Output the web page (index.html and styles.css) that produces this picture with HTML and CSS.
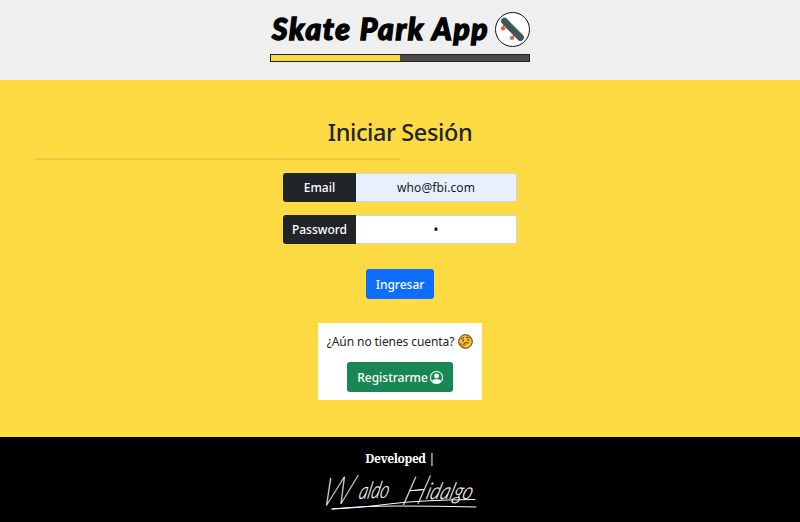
FILE: index.html
```html
<!DOCTYPE html>
<html lang="es">
<head>
<meta charset="utf-8">
<title>Skate Park App</title>
<link rel="stylesheet" href="styles.css">
</head>
<body>
<header class="header">
  <div class="brand">
    <h1 class="brand-name">Skate Park App</h1>
    <svg class="brand-logo" viewBox="0 0 35 35" aria-hidden="true">
      <circle cx="17.5" cy="17.5" r="17" fill="#fff" stroke="#111"/>
      <circle cx="8" cy="16.5" r="2.100" fill="#f2583e"/>
      <circle cx="17" cy="26" r="2.100" fill="#f2583e"/>
      <path d="M9 13l-1 3M19 23l-2 3" stroke="#f2583e" stroke-width="2"/>
      <path d="M9.500 9L13 13 21.500 21.500 25.500 25.500" fill="none" stroke="#3e565b" stroke-width="6.800" stroke-linecap="round" stroke-linejoin="round"/>
      <path d="M11 6.500L28.500 24" stroke="#83877a" stroke-width="1" stroke-dasharray="1 1"/>
    </svg>
  </div>
  <div class="bar"></div>
</header>
<main class="main">
  <h2 class="title">Iniciar Sesión</h2>
  <hr class="rule">
  <form class="form">
    <div class="group">
      <label class="label" for="email">Email</label>
      <input class="input filled" id="email" type="text" value="who@fbi.com">
    </div>
    <div class="group">
      <label class="label" for="password">Password</label>
      <input class="input dot" id="password" type="text" value="•">
    </div>
    <button class="btn primary" type="button">Ingresar</button>
  </form>
  <section class="card">
    <p class="question"><span>¿Aún no tienes cuenta?</span>
      <svg class="emoji" viewBox="0 0 16 16" aria-hidden="true">
        <circle cx="8" cy="8" r="7.300" fill="#fbbd2e" stroke="#3b3020" stroke-width="1"/>
        <path d="M3.500 5l2.500-1M9 3.500q2-.8 3.300.7M6.500 9.800q2.500-1.200 4.500-.3" fill="none" stroke="#33302a" stroke-width="1" stroke-linecap="round"/>
        <circle cx="5.500" cy="6.800" r=".9" fill="#33302a"/>
        <circle cx="10.700" cy="6.500" r=".9" fill="#33302a"/>
        <path d="M2.500 10.300q1-.6 1.300 1l3.700-.8q1.200.3.300 1l-1.500.7q.3 2-1.500 2-2-.3-2.300-3.900z" fill="#f5a51c" stroke="#5b4020" stroke-width=".5"/>
      </svg>
    </p>
    <button class="btn success" type="button">Registrarme
      <svg class="person" viewBox="0 0 16 16" fill="currentColor" aria-hidden="true">
        <path d="M11 6a3 3 0 1 1-6 0 3 3 0 0 1 6 0z"/>
        <path fill-rule="evenodd" stroke="currentColor" stroke-width=".4" d="M0 8a8 8 0 1 1 16 0A8 8 0 0 1 0 8zm8-7a7 7 0 0 0-5.468 11.370C3.242 11.226 4.805 10 8 10s4.757 1.225 5.468 2.370A7 7 0 0 0 8 1z"/>
      </svg>
    </button>
  </section>
</main>
<footer class="footer">
  <div class="developed">Developed |</div>
  <svg class="signature" viewBox="0 0 156 42">
    <g class="sign-text">
      <text class="cap" transform="translate(-2 36) rotate(-6) skewX(-22)" textLength="30" lengthAdjust="spacingAndGlyphs">W</text>
      <text class="low" transform="translate(36 29) rotate(-3) skewX(-16)" textLength="30" lengthAdjust="spacingAndGlyphs">aldo</text>
      <text class="cap" transform="translate(79 35) rotate(-5) skewX(-24)" textLength="22" lengthAdjust="spacingAndGlyphs">H</text>
      <text class="low" transform="translate(103 29) skewX(-16)" textLength="46" lengthAdjust="spacingAndGlyphs">idalgo</text>
    </g>
    <path class="stroke" d="M10 39Q36 38 67 34T153 29.500M10 39Q38 36 77 36T154 37"/>
  </svg>
</footer>
</body>
</html>
```
FILE: styles.css
```css
* { box-sizing: border-box; }
body {
  margin: 0;
  height: 522px;
  display: flex;
  flex-direction: column;
  overflow: hidden;
  font-family: "Noto Sans", "Open Sans", sans-serif;
  font-size: 12px;
  color: #212529;
}
.header {
  height: 80px;
  background: #efefef;
  display: flex;
  flex-direction: column;
  align-items: center;
  padding-top: 11px;
}
.brand {
  width: 260px;
  height: 36px;
  display: flex;
  align-items: center;
  justify-content: space-between;
}
.brand-name {
  margin: -2px 0 0 2px;
  font: italic 900 30px/36px Lato, sans-serif;
  letter-spacing: 1.65px;
  -webkit-text-stroke: 1.4px #000;
  white-space: nowrap;
  color: #000;
}
.brand-logo { width: 35px; height: 35px; flex: none; }
.bar {
  width: 260px;
  height: 8px;
  margin-top: 7px;
  border: 1px solid #242018;
  background: linear-gradient(90deg, #fbd943 50%, #4b4b4b 50%);
}
.main {
  height: 357px;
  background: #ffdb43;
  display: flex;
  flex-direction: column;
  align-items: center;
}
.title {
  margin: 37px 0 0;
  font-size: 23.5px;
  line-height: 30px;
  font-weight: 500;
  letter-spacing: -.4px;
}
.rule {
  align-self: flex-start;
  width: 365px;
  height: 2px;
  margin: 11px 0 13px 35px;
  border: 0;
  background: #eccb43;
}
.form { display: flex; flex-direction: column; align-items: center; }
.group {
  width: 234px;
  height: 29px;
  margin-bottom: 13px;
  display: flex;
}
.label {
  width: 73px;
  background: #212529;
  color: #fff;
  font-weight: 500;
  border-radius: 3px 0 0 3px;
  display: flex;
  align-items: center;
  justify-content: center;
}
.input {
  flex: 1;
  min-width: 0;
  border: 1px solid #ced4da;
  border-left: 0;
  border-radius: 0 3px 3px 0;
  background: #fff;
  padding: 0;
  font: inherit;
  text-align: center;
  color: #171b20;
}
.filled { background: #e8f0fe; letter-spacing: .1px; }
.dot { font-size: 14px; }
.btn {
  height: 30px;
  border: 0;
  border-radius: 3px;
  padding: 0;
  color: #fff;
  font: 500 12px "Noto Sans", sans-serif;
  display: flex;
  align-items: center;
  justify-content: center;
}
.primary { width: 68px; margin-top: 12px; background: #0d6efd; }
.card {
  width: 164px;
  height: 77px;
  margin-top: 24px;
  background: #fff;
  display: flex;
  flex-direction: column;
  align-items: center;
}
.question {
  margin: 10px 0 13px;
  height: 16px;
  display: flex;
  align-items: center;
  gap: 4px;
  white-space: nowrap;
  letter-spacing: -.08px;
}
.emoji { width: 15px; height: 15px; }
.success { width: 106px; gap: 2px; background: #198754; }
.person { width: 13px; height: 13px; }
.footer {
  flex: 1;
  background: #000;
  color: #fff;
  display: flex;
  flex-direction: column;
  align-items: center;
}
.developed {
  margin-top: 14px;
  font: bold 12px/16px "Noto Serif", "Liberation Serif", serif;
  letter-spacing: -.4px;
}
.signature { width: 156px; height: 42px; margin-top: 3px; overflow: visible; }
.sign-text { font-family: Lato, sans-serif; font-style: italic; font-weight: 300; fill: #fff; }
.cap { font-size: 38px; font-weight: 100; stroke: #fff; stroke-width: .5; }
.low { font-size: 23px; stroke: #fff; stroke-width: .2; }
.stroke { fill: none; stroke: #fff; stroke-width: 1; stroke-linecap: round; }
```
